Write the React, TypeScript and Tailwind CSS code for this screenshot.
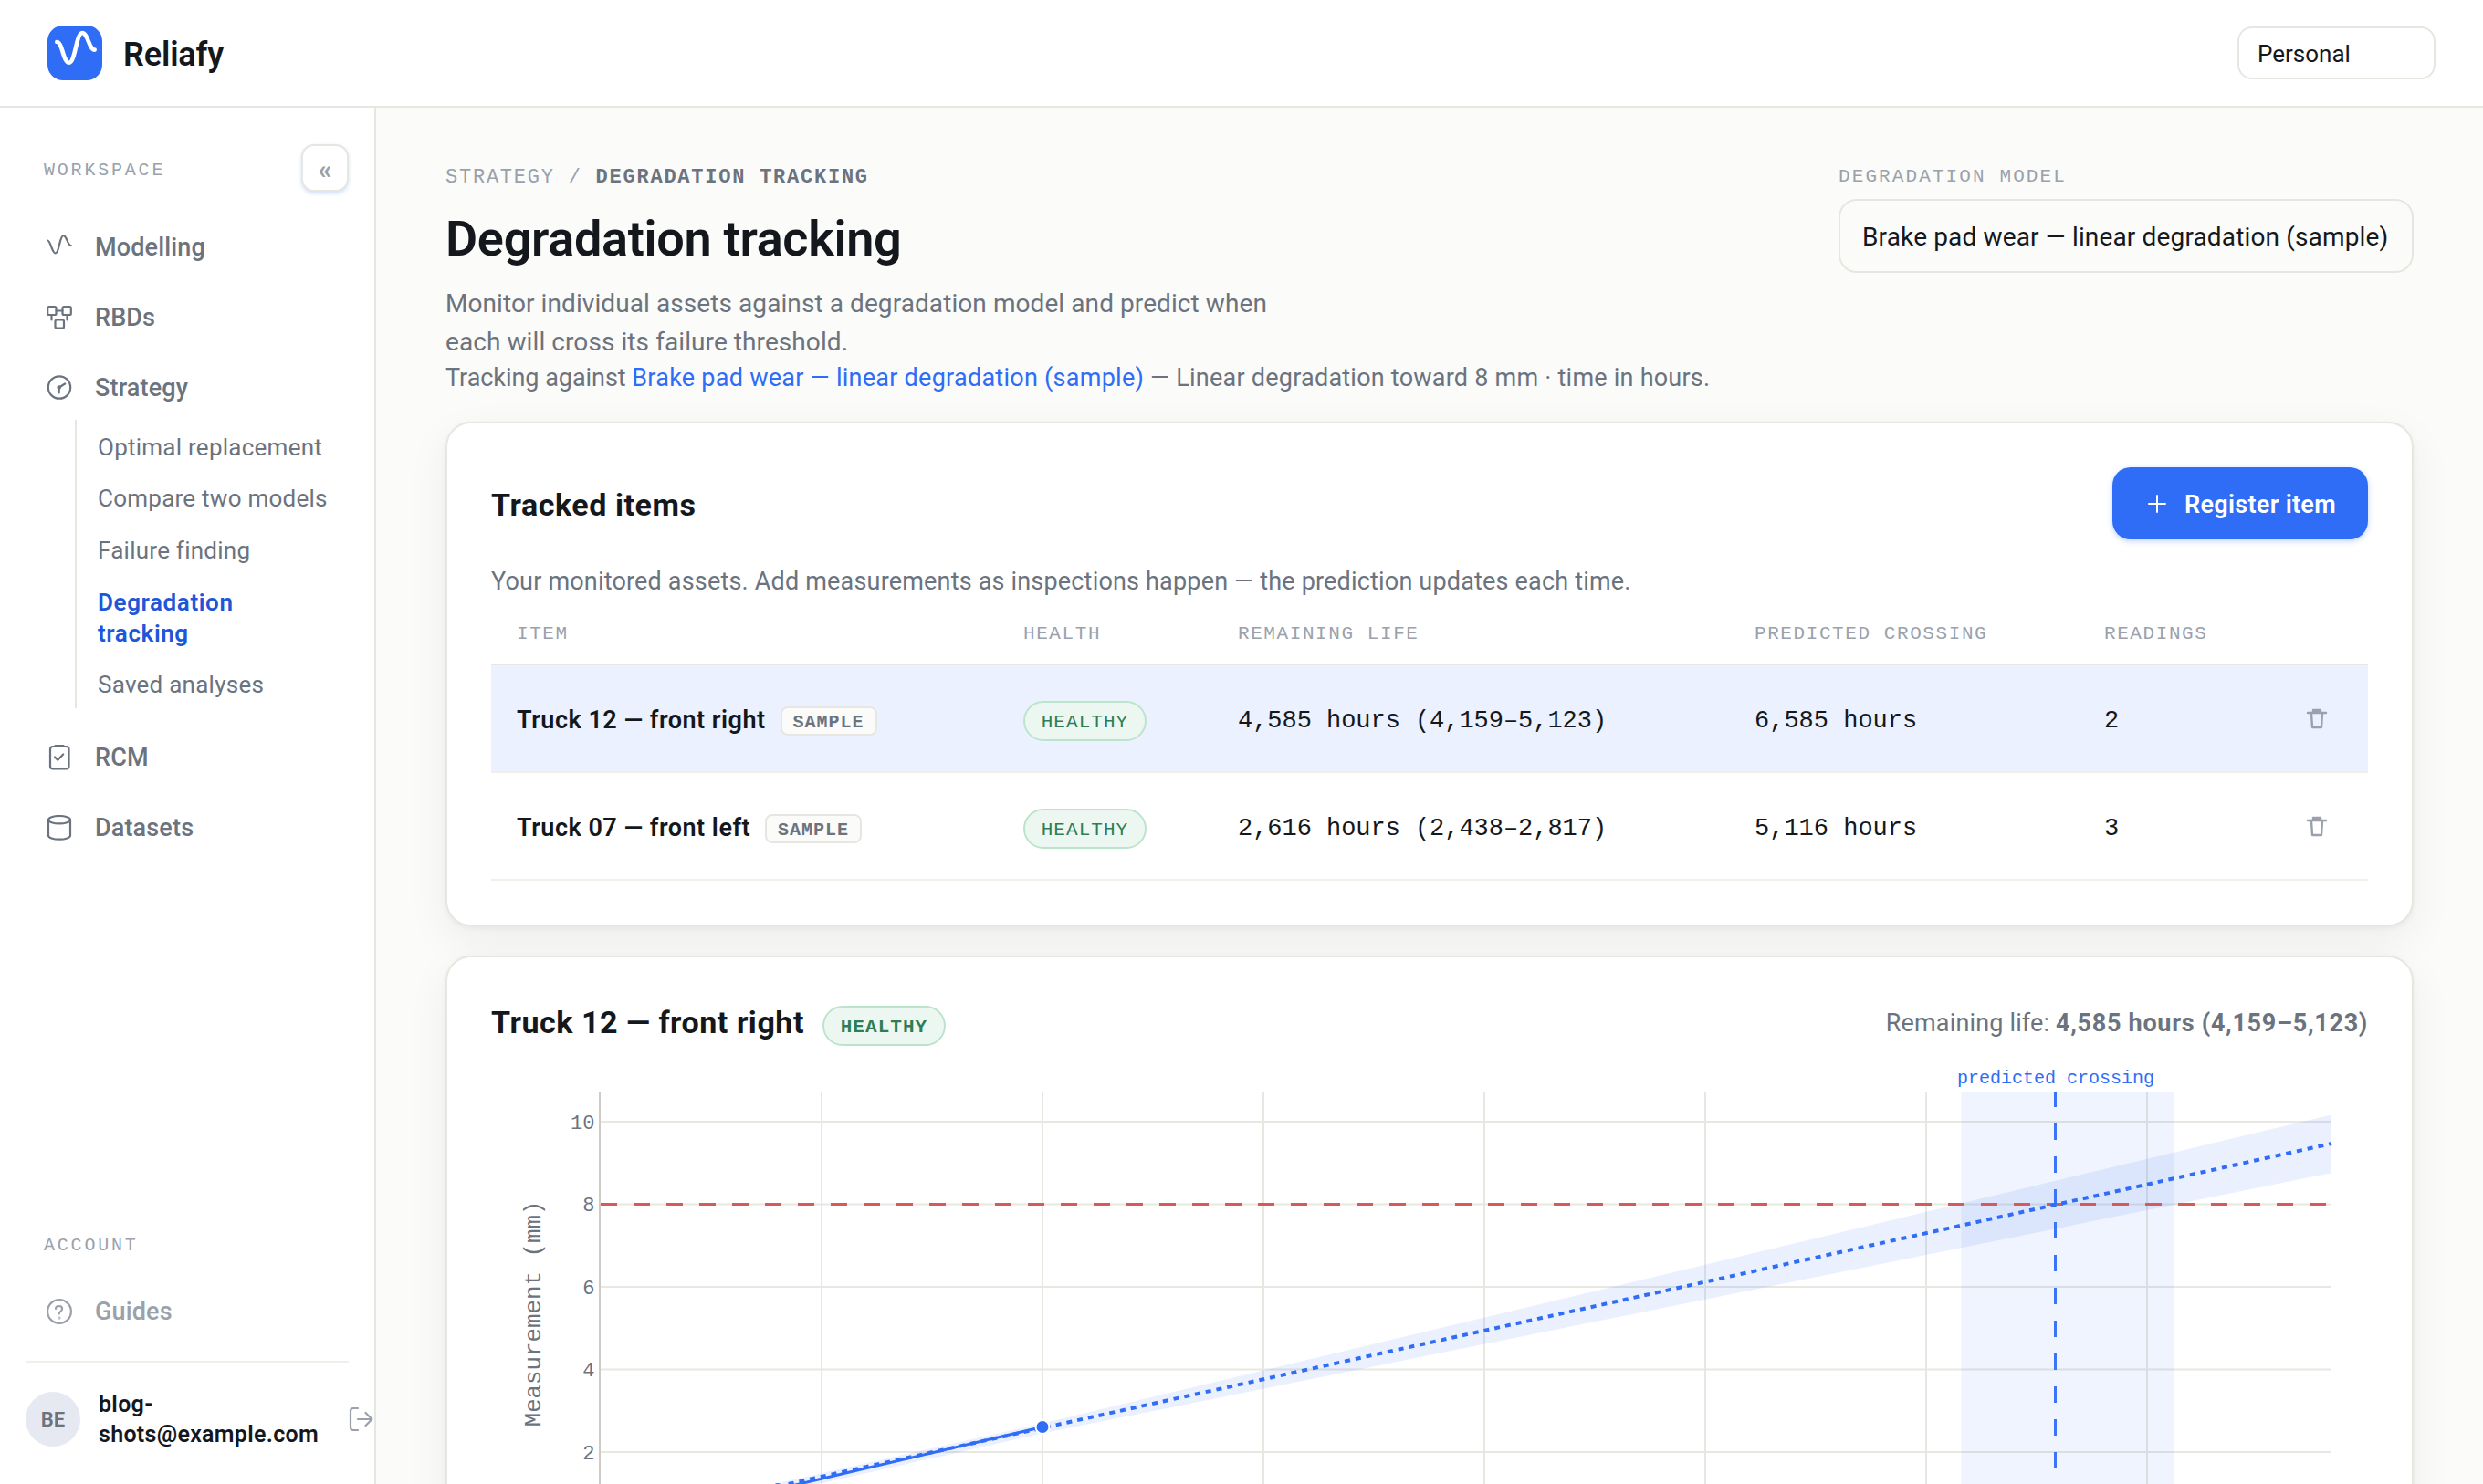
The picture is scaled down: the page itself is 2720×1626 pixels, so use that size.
import type { ReactNode } from 'react';

const items = [
  { name: 'Truck 12 — front right', life: '4,585 hours (4,159–5,123)', crossing: '6,585 hours', readings: 2, selected: true },
  { name: 'Truck 07 — front left', life: '2,616 hours (2,438–2,817)', crossing: '5,116 hours', readings: 3, selected: false },
];

const subItems = ['Optimal replacement', 'Compare two models', 'Failure finding', 'Degradation tracking', 'Saved analyses'];

const columns = ['Item', 'Health', 'Remaining life', 'Predicted crossing', 'Readings', ''];

const iconProps = {
  width: 28,
  height: 28,
  viewBox: '0 0 28 28',
  fill: 'none',
  stroke: 'currentColor',
  strokeWidth: 2.2,
  strokeLinecap: 'round' as const,
  strokeLinejoin: 'round' as const,
  className: 'shrink-0',
};

const WaveIcon = () => (
  <svg {...iconProps}>
    <path d="M1.200 6.500C4.600 6.500 5.600 20.500 9.800 20.500S14.200 1.200 18.400 1.200c3.800 0 4.600 10.800 8.400 10.800" />
  </svg>
);

const BlocksIcon = () => (
  <svg {...iconProps}>
    <rect x="1.200" y="2" width="9.300" height="9" rx="1.500" />
    <rect x="17.500" y="2" width="9.300" height="9" rx="1.500" />
    <rect x="9.500" y="16.500" width="9.500" height="9" rx="1.500" />
    <path d="M10.500 6.500h7M5.500 11v5.500M22.500 11v5.500" />
  </svg>
);

const GaugeIcon = () => (
  <svg {...iconProps}>
    <circle cx="14" cy="13.500" r="12.200" />
    <path d="M13.700 19.500v-6l6.500-4" />
    <circle cx="13.700" cy="13.500" r="1.200" fill="currentColor" />
  </svg>
);

const ClipboardIcon = () => (
  <svg {...iconProps}>
    <rect x="4" y="2" width="20.500" height="24.500" rx="3" />
    <path d="M9.500 1.200h9M9 13.500l3.200 3.300 6-6.300" />
  </svg>
);

const DatabaseIcon = () => (
  <svg {...iconProps}>
    <ellipse cx="14" cy="5.200" rx="12" ry="4.200" />
    <path d="M2 5.200v17.300C2 24.700 7.300 26.700 14 26.700s12-2 12-4.200V5.200" />
  </svg>
);

const HelpIcon = () => (
  <svg {...iconProps}>
    <circle cx="14" cy="14" r="12.900" />
    <path d="M10 11c0-2 1.600-3 3.600-3 2.200 0 3.500 1.300 3.500 3 0 2.700-3.300 2.800-3.300 5.500" />
    <circle cx="14" cy="21" r=".4" />
  </svg>
);

const TrashIcon = () => (
  <svg className="relative top-px" width="24" height="24" viewBox="0 0 24 24" fill="none" stroke="#9aa1ab" strokeWidth="2.4" strokeLinecap="round" strokeLinejoin="round">
    <path d="M2 5h20M6 5.500l1 15.500h10l1-15.500" />
    <rect x="8" y="2" width="8" height="2.500" fill="#9aa1ab" />
  </svg>
);

function NavItem({ icon, label }: { icon: ReactNode; label: string }) {
  return (
    <a className="flex h-[77px] items-center gap-[25px] pl-[23px] text-[27px] font-medium tracking-[0.15px]">
      {icon}
      <span className="pt-0.5">{label}</span>
    </a>
  );
}

function HealthBadge({ bold = false }: { bold?: boolean }) {
  return (
    <span
      className={`inline-flex h-11 w-[135px] items-center justify-center rounded-full border-2 border-[#bce4cd] bg-[#edf7f1] pt-1 font-['Liberation_Mono',monospace] text-[21px] tracking-[0.05em] text-[#2f7d54] ${bold ? 'font-bold' : 'font-normal'}`}
    >
      HEALTHY
    </span>
  );
}

function Sidebar() {
  return (
    <aside className="flex w-[412px] shrink-0 flex-col border-r-2 border-[#e7e7e1] bg-white px-7 pt-10 pb-[38px] text-[#6b737e]">
      <div className="flex items-center justify-between pl-5">
        <span className="pt-[5px] font-['Liberation_Mono',monospace] text-[20px] tracking-[0.14em] text-[#9aa1ab]">WORKSPACE</span>
        <button className="flex size-[52px] items-center justify-center rounded-[14px] border-2 border-[#e7e7e1] bg-white pt-0.5 text-[30px] font-bold text-[#9aa1ab] shadow-[0_2px_4px_rgba(47,109,246,0.22)]">
          «
        </button>
      </div>

      <nav className="mt-[22px]">
        <NavItem icon={<WaveIcon />} label="Modelling" />
        <NavItem icon={<BlocksIcon />} label="RBDs" />
        <NavItem icon={<GaugeIcon />} label="Strategy" />
        <ul className="-mt-[3px] mb-[15px] ml-[54px] h-[316px] border-l-2 border-[#e7e7e1] pt-[1.500px] pl-[23px]">
          {subItems.map((label) => (
            <li
              key={label}
              className={`w-[200px] py-[11.3px] text-[26px] leading-[34px] ${
                label === 'Degradation tracking' ? 'font-semibold tracking-[0.6px] text-[#1f56d8]' : 'tracking-[0.25px] whitespace-nowrap'
              }`}
            >
              {label}
            </li>
          ))}
        </ul>
        <NavItem icon={<ClipboardIcon />} label="RCM" />
        <NavItem icon={<DatabaseIcon />} label="Datasets" />
      </nav>

      <div className="mt-auto text-[#9aa1ab]">
        <div className="pl-5 font-['Liberation_Mono',monospace] text-[20px] leading-8 tracking-[0.14em]">ACCOUNT</div>
        <div className="mt-[17px]">
          <NavItem icon={<HelpIcon />} label="Guides" />
        </div>
        <div className="mt-4 flex items-center border-t-2 border-[#f0f0eb] pt-7">
          <div className="flex size-[60px] shrink-0 items-center justify-center rounded-full bg-[#e6e9f1] pt-0.5 text-[22px] font-semibold text-[#6b737e]">
            BE
          </div>
          <div className="ml-5 w-[240px] shrink-0 pt-px text-[25px] leading-[33px] font-semibold tracking-[0.3px] text-[#14181d]">
            blog-
            <br />
            shots@example.com
          </div>
          <svg className="ml-[34px] shrink-0" width="28" height="28" viewBox="0 0 28 28" fill="none" stroke="currentColor" strokeWidth="2.2" strokeLinecap="round" strokeLinejoin="round">
            <path d="M10 2H5a3 3 0 0 0-3 3v18a3 3 0 0 0 3 3h5M10 14h15.500M18.500 7l7 7-7 7" />
          </svg>
        </div>
      </div>
    </aside>
  );
}

// time (hours) and measurement (mm) to chart coordinates
const px = (hours: number) => 120 + hours * 0.242;
const py = (mm: number) => 521.5 - mm * 45.25;

function DegradationChart() {
  return (
    <svg className="mt-[15px] block font-['Liberation_Mono',monospace]" width="2056" height="560" viewBox="0 0 2056 560" fill="none">
      {[10, 8, 6, 4, 2].map((v) => (
        <g key={v}>
          <path d={`M120 ${py(v)}H2016`} stroke="#e8e8e2" strokeWidth="2" />
          <text x="113.500" y={py(v) + 7.5} textAnchor="end" fontSize="22" fill="#6b737e">
            {v}
          </text>
        </g>
      ))}
      {[1000, 2000, 3000, 4000, 5000, 6000, 7000].map((h) => (
        <path key={h} d={`M${px(h)} 37V560`} stroke="#e8e8e2" strokeWidth="2" />
      ))}
      <path d="M119 37V560" stroke="#cfccc7" strokeWidth="2" />

      <rect x="1610.500" y="37" width="233" height="523" fill="#2f6df6" fillOpacity="0.08" />
      <path d="M314 465L604 399.500 2016 61.400V125.200L604 410.500 314 476z" fill="#2f6df6" fillOpacity="0.1" />

      <path d={`M120 ${py(8)}H2016`} stroke="#d65a5a" strokeWidth="3" strokeDasharray="18 18" />
      <path d="M1713.500 37V560" stroke="#3b75f7" strokeWidth="3" strokeDasharray="18 18" strokeDashoffset="2" />
      <path d="M314 468.500L1713.500 160 2016 93" stroke="#2f6df6" strokeWidth="4" strokeDasharray="6 6" />
      <path d="M314 471.500L604 403.500" stroke="#2f6df6" strokeWidth="3" />
      <circle cx="314" cy="471.500" r="7.500" fill="#2f6df6" stroke="#fff" strokeWidth="2" />
      <circle cx="604" cy="403.500" r="7.500" fill="#2f6df6" stroke="#fff" strokeWidth="2" />

      <text x="1714" y="27" textAnchor="middle" fontSize="20" fill="#2f6df6">
        predicted crossing
      </text>
      <text transform="translate(54 279.5) rotate(-90)" textAnchor="middle" fontSize="25.8" fill="#6b737e">
        Measurement (mm)
      </text>
    </svg>
  );
}

function Card({ className, children }: { className: string; children: ReactNode }) {
  return (
    <section
      className={`rounded-[28px] border-2 border-[#e7e7e1] bg-white p-12 shadow-[0_2px_6px_rgba(20,24,29,0.05),0_16px_48px_rgba(20,24,29,0.06)] ${className}`}
    >
      {children}
    </section>
  );
}

export default function App() {
  return (
    <div className="flex h-screen flex-col overflow-hidden bg-white font-['Roboto',sans-serif] text-[#14181d]">
      <header className="flex h-[118px] shrink-0 items-center justify-between border-b-2 border-[#e7e7e1] bg-white px-[52px]">
        <div className="flex items-center gap-[23px]">
          <svg width="60" height="60" viewBox="0 0 60 60" fill="none">
            <rect width="60" height="60" rx="17" fill="#2f6df6" />
            <path d="M10.300 18C16.500 18 17 40.700 23.700 40.700S31.500 8 38 8c6.300 0 7.500 18.600 13.700 18.600" stroke="#fff" strokeWidth="4.600" strokeLinecap="round" />
          </svg>
          <span className="pt-[3px] text-[36px] font-semibold tracking-[-0.15px]">Reliafy</span>
        </div>
        <div className="flex h-[58px] w-[217px] items-center rounded-[16px] border-2 border-[#e7e7e1] pt-0.5 pl-5 text-[26px]">Personal</div>
      </header>

      <div className="flex min-h-0 grow">
        <Sidebar />

        <main className="min-w-0 grow overflow-hidden bg-[#fbfbf9] px-[76px] pt-[61px]">
          <div className="flex items-start justify-between">
            <div className="text-[#6b737e]">
              <div className="font-['Liberation_Mono',monospace] text-[22px] leading-8 tracking-[0.08em] text-[#9aa1ab]">
                STRATEGY / <span className="font-bold text-[#6b737e]">DEGRADATION TRACKING</span>
              </div>
              <h1 className="mt-[19px] text-[54px] leading-[64px] font-semibold tracking-[-0.3px] text-[#14181d]">Degradation tracking</h1>
              <p className="mt-[18px] w-[940px] text-[28px] leading-[42px] tracking-[0.08px]">
                Monitor individual assets against a degradation model and predict when each will cross its failure threshold.
              </p>
              <p className="text-[27px] leading-9 tracking-[0.23px]">
                <span className="tracking-[-0.05px]">Tracking against </span>
                <a className="tracking-[0.26px] text-[#2f6df6]">Brake pad wear — linear degradation (sample)</a> — Linear degradation toward 8 mm · time in hours.
              </p>
            </div>
            <div className="w-[630px]">
              <div className="font-['Liberation_Mono',monospace] text-[21px] leading-[30px] tracking-[0.1em] text-[#9aa1ab]">DEGRADATION MODEL</div>
              <div className="mt-[9px] flex h-[81px] items-center rounded-[20px] border-2 border-[#e7e7e1] pt-0.5 pl-6 text-[28px] tracking-[0.15px]">
                Brake pad wear — linear degradation (sample)
              </div>
            </div>
          </div>

          <Card className="mt-[30px] h-[553px]">
            <div className="flex h-[79px] items-center justify-between">
              <h2 className="pt-[3px] text-[34px] font-bold tracking-[0.55px]">Tracked items</h2>
              <button className="flex h-full w-[280px] items-center rounded-[20px] bg-[#2f6df6] pl-[38px] text-[27px] font-semibold tracking-[0.3px] text-white shadow-[0_2px_6px_rgba(47,109,246,0.3)]">
                <svg width="22" height="22" viewBox="0 0 22 22" stroke="#fff" strokeWidth="2" strokeLinecap="round">
                  <path d="M11 2v18M2 11h18" />
                </svg>
                <span className="pt-[3px] pl-[19px]">Register item</span>
              </button>
            </div>
            <p className="mt-[26px] text-[27px] leading-10 tracking-[0.18px] text-[#6b737e]">
              Your monitored assets. Add measurements as inspections happen — the prediction updates each time.
            </p>

            <table className="w-full table-fixed border-separate border-spacing-0 text-left">
              <colgroup>
                <col className="w-[555px]" />
                <col className="w-[235px]" />
                <col className="w-[566px]" />
                <col className="w-[383px]" />
                <col className="w-[221px]" />
                <col />
              </colgroup>
              <thead>
                <tr>
                  {columns.map((column) => (
                    <th
                      key={column}
                      className="h-[72px] border-b-2 border-[#e7e7e1] px-7 pt-1.5 font-['Liberation_Mono',monospace] text-[21px] font-normal tracking-[1.58px] whitespace-nowrap text-[#9aa1ab] uppercase"
                    >
                      {column}
                    </th>
                  ))}
                </tr>
              </thead>
              <tbody className="[&_td]:h-[118px] [&_td]:border-b-2 [&_td]:border-[#f0f0eb] [&_td]:px-7">
                {items.map((item) => (
                  <tr key={item.name} className={item.selected ? 'bg-[#ebf1fe]' : ''}>
                    <td>
                      <div className="flex items-center pt-1">
                        <span className="text-[27px] font-semibold tracking-[0.49px] whitespace-nowrap">{item.name}</span>
                        <span className="mt-0.5 ml-4 flex h-8 items-center rounded-[8px] border-2 border-[#e7e7e1] bg-[#fbfbf9] px-3 pt-1 font-['Liberation_Mono',monospace] text-[20px] font-bold tracking-[0.05em] text-[#6b737e]">
                          SAMPLE
                        </span>
                      </div>
                    </td>
                    <td>
                      <div className="flex pt-1.5">
                        <HealthBadge />
                      </div>
                    </td>
                    <td className="pt-[7px] font-['Liberation_Mono',monospace] text-[27px] tracking-[-0.04px] whitespace-nowrap">{item.life}</td>
                    <td className="pt-[7px] font-['Liberation_Mono',monospace] text-[27px] whitespace-nowrap">{item.crossing}</td>
                    <td className="pt-[7px] font-['Liberation_Mono',monospace] text-[27px]">{item.readings}</td>
                    <td>
                      <TrashIcon />
                    </td>
                  </tr>
                ))}
              </tbody>
            </table>
          </Card>

          <Card className="mt-8 h-[760px]">
            <div className="flex h-12 items-center justify-between">
              <h2 className="flex items-center text-[34px] font-bold tracking-[0.53px]">
                <span className="pb-0.5">Truck 12 — front right</span>
                <span className="ml-5 flex pt-1.5">
                  <HealthBadge bold />
                </span>
              </h2>
              <div className="text-[27px] tracking-[0.15px] text-[#6b737e]">
                Remaining life: <strong className="font-bold tracking-[0.7px]">4,585 hours (4,159–5,123)</strong>
              </div>
            </div>
            <DegradationChart />
          </Card>
        </main>
      </div>
    </div>
  );
}
